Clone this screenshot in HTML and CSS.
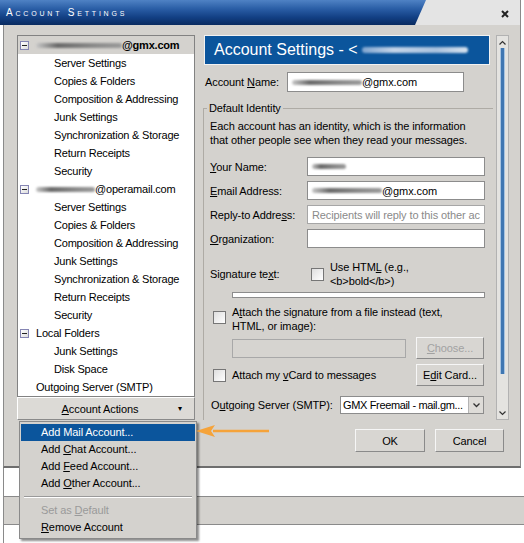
FILE: index.html
```html
<!DOCTYPE html>
<html lang="en">
<head>
    <meta charset="UTF-8">
    <title>Account Settings</title>
    <link rel="stylesheet" href="styles.css">
</head>
<body>

    <div class="window">
        <div class="titlebar">
            <div class="title-tab">Account Settings</div>
            <div class="title-rest">
                <svg class="close" width="8" height="8" viewBox="0 0 8 8"><path d="M1 1 L7 7 M7 1 L1 7" stroke="#222" stroke-width="2"/></svg>
            </div>
        </div>

        <div class="dialog">
            <div class="main">
                <!-- Account tree -->
                <div class="sidebar">
                    <ul class="tree">
                        <li class="row top selected"><span class="twisty"></span><span class="smear" style="width:86px"></span><b>@gmx.com</b></li>
                        <li class="row child">Server Settings</li>
                        <li class="row child">Copies &amp; Folders</li>
                        <li class="row child">Composition &amp; Addressing</li>
                        <li class="row child">Junk Settings</li>
                        <li class="row child">Synchronization &amp; Storage</li>
                        <li class="row child">Return Receipts</li>
                        <li class="row child">Security</li>
                        <li class="row top"><span class="twisty"></span><span class="smear" style="width:59px"></span>@operamail.com</li>
                        <li class="row child">Server Settings</li>
                        <li class="row child">Copies &amp; Folders</li>
                        <li class="row child">Composition &amp; Addressing</li>
                        <li class="row child">Junk Settings</li>
                        <li class="row child">Synchronization &amp; Storage</li>
                        <li class="row child">Return Receipts</li>
                        <li class="row child">Security</li>
                        <li class="row top"><span class="twisty"></span>Local Folders</li>
                        <li class="row child">Junk Settings</li>
                        <li class="row child">Disk Space</li>
                        <li class="row plain">Outgoing Server (SMTP)</li>
                    </ul>
                    <button class="actions"><span class="actions-label"><u>A</u>ccount Actions</span><span class="drop">&#9662;</span></button>
                </div>

                <!-- Settings pane -->
                <div class="pane">
                    <div class="pane-header">Account Settings - &lt;<span class="smear light"></span></div>

                    <div class="name-row">
                        <label class="name-label">Account <u>N</u>ame:</label>
                        <div class="field name-field"><span class="smear" style="width:70px"></span>@gmx.com</div>
                    </div>

                    <fieldset class="identity">
                        <legend>Default Identity</legend>
                        <p class="desc">Each account has an identity, which is the information<br>that other people see when they read your messages.</p>

                        <div class="field-row first">
                            <label><u>Y</u>our Name:</label>
                            <div class="field"><span class="smear" style="width:34px"></span></div>
                        </div>
                        <div class="field-row">
                            <label><u>E</u>mail Address:</label>
                            <div class="field"><span class="smear" style="width:70px"></span>@gmx.com</div>
                        </div>
                        <div class="field-row">
                            <label>Reply-to Addre<u>s</u>s:</label>
                            <div class="field placeholder">Recipients will reply to this other ac</div>
                        </div>
                        <div class="field-row">
                            <label><u>O</u>rganization:</label>
                            <div class="field"></div>
                        </div>

                        <div class="sig-row">
                            <label class="sig-label">Signature te<u>x</u>t:</label>
                            <span class="check"></span>
                            <span class="two-line">Use HTM<u>L</u> (e.g.,<br>&lt;b&gt;bold&lt;/b&gt;)</span>
                        </div>
                        <div class="sig-box"></div>

                        <div class="attach-row">
                            <span class="check"></span>
                            <span class="two-line">A<u>t</u>tach the signature from a file instead (text,<br>HTML, or image):</span>
                        </div>
                        <div class="file-row">
                            <div class="file-field"></div>
                            <button class="btn disabled"><u>C</u>hoose...</button>
                        </div>

                        <div class="vcard-row">
                            <span class="check"></span>
                            <span class="vcard-label">Attach my <u>v</u>Card to messages</span>
                            <button class="btn">E<u>d</u>it Card...</button>
                        </div>

                        <div class="smtp-row">
                            <label class="smtp-label">O<u>u</u>tgoing Server (SMTP):</label>
                            <div class="select">
                                <span class="select-value">GMX Freemail - mail.gm...</span>
                                <span class="select-btn"><svg width="7" height="5" viewBox="0 0 7 5"><path d="M0.5 0.5 L3.5 3.5 L6.5 0.5" fill="none" stroke="#333" stroke-width="1.3"/></svg></span>
                            </div>
                        </div>
                    </fieldset>
                </div>

                <!-- Scrollbar -->
                <div class="scrollbar">
                    <div class="sb-btn"><svg width="7" height="5" viewBox="0 0 7 5"><path d="M0.5 4.5 L3.5 1.5 L6.5 4.5" fill="none" stroke="#333" stroke-width="1.2"/></svg></div>
                    <div class="sb-thumb"></div>
                    <div class="sb-track"></div>
                    <div class="sb-btn"><svg width="7" height="5" viewBox="0 0 7 5"><path d="M0.5 0.5 L3.5 3.5 L6.5 0.5" fill="none" stroke="#333" stroke-width="1.2"/></svg></div>
                </div>
            </div>

            <div class="footer">
                <button class="btn ok">OK</button>
                <button class="btn cancel">Cancel</button>
            </div>
        </div>
    </div>

    <!-- window behind the dialog -->
    <div class="backdrop">
        <div class="band"></div>
    </div>

    <!-- Account Actions popup -->
    <ul class="menu">
        <li class="menu-item active">Add Mail Account...</li>
        <li class="menu-item">Add <u>C</u>hat Account...</li>
        <li class="menu-item">Add <u>F</u>eed Account...</li>
        <li class="menu-item">Add <u>O</u>ther Account...</li>
        <li class="menu-sep"></li>
        <li class="menu-item grey">Set as <u>D</u>efault</li>
        <li class="menu-item"><u>R</u>emove Account</li>
    </ul>

    <svg class="arrow" width="76" height="20" viewBox="0 0 76 20">
        <path d="M18 10 L74 10" stroke="#f5a33a" stroke-width="2.5"/>
        <path d="M1 10 L20 4 L16 10 L20 16 Z" fill="#f5a33a"/>
    </svg>

</body>
</html>
```

FILE: styles.css
```css
/* Basic Styles */
body {
    margin: 0;
    width: 524px;
    height: 543px;
    overflow: hidden;
    position: relative;
    background: #fff;
    font-family: "Liberation Sans", Arial, sans-serif;
    font-size: 11px;
    letter-spacing: -0.1px;
    color: #000;
}

button {
    font-family: inherit;
    font-size: 11px;
    letter-spacing: -0.1px;
    color: #000;
    padding: 0;
}

/* Title bar */
.window {
    width: 521px;
}

.titlebar {
    height: 25px;
    display: flex;
    background: #e4e4e4;
    border-right: 1px solid #8a8a8a;
}

.title-tab {
    width: 426px;
    clip-path: polygon(0 0, 426px 0, 415px 25px, 0 25px);
    background: linear-gradient(#4f82c4, #2a5ea6 35%, #123f83 70%, #0a2b60);
    color: #fff;
    padding-left: 6px;
    line-height: 26px;
    font-size: 10px;
    font-variant: small-caps;
    letter-spacing: 2.8px;
    box-sizing: border-box;
}

.title-rest {
    flex: 1;
    display: flex;
    justify-content: flex-end;
    align-items: center;
    padding-right: 11px;
    padding-top: 3px;
}

/* Dialog */
.dialog {
    margin-left: 3px;
    width: 518px;
    height: 443px;
    box-sizing: border-box;
    border: 1px solid #8a8a8a;
    border-top: none;
    border-bottom: 2px solid #6e6e6e;
    background: #d4d2ce;
    padding: 10px 0 0 13px;
}

.main {
    display: flex;
    height: 385px;
}

/* Sidebar tree */
.sidebar {
    width: 178px;
    margin-right: 9px;
    display: flex;
    flex-direction: column;
}

.tree {
    list-style: none;
    margin: 0;
    padding: 0;
    height: 362px;
    box-sizing: border-box;
    border: 1px solid #828282;
    background: #fff;
}

.row {
    height: 18px;
    display: flex;
    align-items: center;
    white-space: nowrap;
    letter-spacing: -0.2px;
}

.row.top {
    padding-left: 2px;
}

.row.child {
    padding-left: 36px;
}

.row.plain {
    padding-left: 18px;
}

.row.selected {
    background: #d4d2ce;
}

.twisty {
    width: 9px;
    height: 9px;
    box-sizing: border-box;
    border: 1px solid #8585b3;
    background: linear-gradient(135deg, #fff, #dcdcdc);
    margin-right: 7px;
    position: relative;
}

.twisty::after {
    content: "";
    position: absolute;
    left: 1px;
    top: 3px;
    width: 5px;
    height: 1px;
    background: #222;
}

.smear {
    display: inline-block;
    height: 5px;
    border-radius: 3px;
    background: linear-gradient(90deg, #c8c8c8, #6a6a6a 25%, #8c8c8c 70%, #9a9a9a);
    filter: blur(1.3px);
}

.smear.light {
    width: 106px;
    height: 6px;
    margin-left: 4px;
    background: linear-gradient(90deg, #7ea4cf, #c3d4e8 30%, #a9c1de 70%, #d6e2ef);
}

.actions {
    height: 23px;
    box-sizing: border-box;
    border: 1px solid;
    border-color: #fff #8a8a8a #8a8a8a #fff;
    background: #dcdad6;
    display: flex;
    align-items: center;
    padding: 0 10px 0 6px;
}

.actions-label {
    flex: 1;
    text-align: center;
}

.drop {
    width: 8px;
    font-size: 8px;
}

/* Settings pane */
.pane {
    width: 286px;
    display: flex;
    flex-direction: column;
}

.pane-header {
    height: 30px;
    box-sizing: border-box;
    border: 1px solid #f2f2f2;
    background: #0b559c;
    color: #fff;
    font-size: 16px;
    letter-spacing: 0;
    padding-left: 9px;
    display: flex;
    align-items: center;
    white-space: nowrap;
}

.name-row {
    display: flex;
    align-items: center;
    height: 20px;
    margin-top: 7px;
    padding-left: 1px;
}

.name-label {
    width: 82px;
}

.field {
    width: 178px;
    height: 19px;
    box-sizing: border-box;
    border: 1px solid #8c8c8c;
    background: #fff;
    display: flex;
    align-items: center;
    padding-left: 4px;
    white-space: nowrap;
    overflow: hidden;
}

.name-field {
    width: 177px;
    height: 20px;
}

.field.placeholder {
    color: #8a8a8a;
    border-color: #a6a6a6;
}

.identity {
    margin: 10px 0 0 -1px;
    padding: 0 8px 0 6px;
    width: 290px;
    box-sizing: border-box;
    flex: 1;
    min-width: 0;
    border: none;
    border-top: 1px solid #aeaba5;
    border-left: 1px solid #aeaba5;
}

.identity legend {
    padding: 0 2px;
    margin-left: -3px;
}

.desc {
    margin: 5px 0 0;
    line-height: 14px;
}

.field-row {
    display: flex;
    align-items: center;
    height: 19px;
    margin-top: 5px;
}

.field-row.first {
    margin-top: 10px;
}

.field-row label {
    width: 97px;
}

.check {
    width: 13px;
    height: 13px;
    box-sizing: border-box;
    border: 1px solid #767676;
    background: linear-gradient(135deg, #dedede, #fff);
    flex-shrink: 0;
}

.two-line {
    line-height: 14px;
    margin-left: 6px;
}

.sig-row {
    display: flex;
    align-items: center;
    height: 28px;
    margin-top: 12px;
}

.sig-label {
    width: 101px;
}

.sig-box {
    margin: 4px 0 0 22px;
    width: 253px;
    height: 6px;
    box-sizing: border-box;
    border: 1px solid #8c8c8c;
    background: #fff;
}

.attach-row {
    display: flex;
    margin-top: 7px;
}

.attach-row .check {
    margin: 6px 0 0 3px;
}

.file-row {
    display: flex;
    align-items: center;
    height: 22px;
    margin-top: 4px;
    padding-left: 22px;
}

.file-field {
    width: 174px;
    height: 19px;
    box-sizing: border-box;
    border: 1px solid #a8a8a8;
    background: #d6d4d0;
    margin-right: 10px;
}

.btn {
    width: 68px;
    height: 22px;
    box-sizing: border-box;
    border: 1px solid;
    border-color: #f6f6f6 #8a8a8a #8a8a8a #f6f6f6;
    background: #d8d6d2;
}

.btn.disabled {
    color: #a2a2a2;
}

.vcard-row {
    display: flex;
    align-items: center;
    height: 22px;
    margin-top: 5px;
}

.vcard-row .check {
    margin-left: 3px;
}

.vcard-label {
    flex: 1;
    margin-left: 6px;
}

.vcard-row .btn {
    margin-right: 1px;
}

.smtp-row {
    display: flex;
    align-items: center;
    height: 18px;
    margin-top: 10px;
    padding-left: 1px;
}

.smtp-label {
    width: 129px;
}

.select {
    width: 144px;
    height: 18px;
    box-sizing: border-box;
    border: 1px solid #8c8c8c;
    background: #fff;
    display: flex;
    align-items: center;
}

.select-value {
    flex: 1;
    padding-left: 2px;
    letter-spacing: -0.35px;
    white-space: nowrap;
}

.select-btn {
    width: 15px;
    height: 16px;
    box-sizing: border-box;
    border-left: 1px solid #b4b4b4;
    background: #dedcd8;
    display: flex;
    align-items: center;
    justify-content: center;
}

/* Scrollbar */
.scrollbar {
    width: 13px;
    margin-left: 6px;
    box-sizing: border-box;
    border: 1px solid #b2b2b2;
    background: #e4e3e0;
    display: flex;
    flex-direction: column;
}

.sb-btn {
    height: 12px;
    display: flex;
    align-items: center;
    justify-content: center;
}

.sb-thumb {
    height: 326px;
    margin: 0 3px;
    border-left: 1px solid #a9c4e0;
    border-right: 1px solid #a9c4e0;
    background: #4077b2;
}

.sb-track {
    flex: 1;
}

/* Footer buttons */
.footer {
    display: flex;
    justify-content: flex-end;
    gap: 10px;
    margin-top: 9px;
    padding-right: 16px;
}

.footer .btn {
    height: 23px;
}

.ok {
    width: 70px;
}

.cancel {
    width: 69px;
}

/* Window behind */
.backdrop {
    margin-left: 3px;
    height: 75px;
    box-sizing: border-box;
    border-left: 1px solid #8a8a8a;
    padding-top: 28px;
}

.band {
    height: 29px;
    box-sizing: border-box;
    border-top: 1px solid #8a8a8a;
    border-bottom: 1px solid #8a8a8a;
    background: #d4d2ce;
}

/* Popup menu */
.menu {
    position: absolute;
    left: 19px;
    top: 421px;
    width: 178px;
    box-sizing: border-box;
    margin: 0;
    padding: 2px 1px;
    list-style: none;
    border: 1px solid #8a8a8a;
    background: #d4d2ce;
    box-shadow: 2px 2px 2px rgba(0, 0, 0, 0.45);
}

.menu-item {
    height: 17px;
    line-height: 17px;
    padding-left: 20px;
    white-space: nowrap;
}

.menu-item.active {
    background: #0b559c;
    color: #fff;
}

.menu-item.grey {
    color: #9a9a9a;
}

.menu-sep {
    height: 10px;
    margin: 0 3px;
    background: linear-gradient(transparent 4px, #9a9a9a 4px, #9a9a9a 5px, #fff 5px, #fff 6px, transparent 6px);
}

.arrow {
    position: absolute;
    left: 195px;
    top: 421px;
}
```
